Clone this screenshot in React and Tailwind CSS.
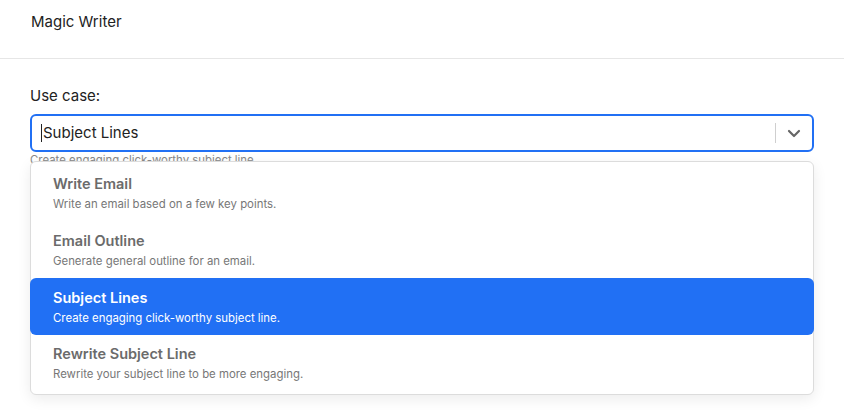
import React from "react";

const items = [
  { title: "Write Email", desc: "Write an email based on a few key points." },
  { title: "Email Outline", desc: "Generate general outline for an email." },
  { title: "Subject Lines", desc: "Create engaging click-worthy subject line.", active: true },
  { title: "Rewrite Subject Line", desc: "Rewrite your subject line to be more engaging." },
];

export default function App() {
  return (
    <div
      className="relative w-[844px] h-[419px] bg-white overflow-hidden text-[#222]"
      style={{ fontFamily: "Inter, 'Noto Sans', sans-serif" }}
    >
      <div className="h-[59px] border-b border-[#e6e6e6] px-[31px] pt-[12px]">
        <div className="text-[15px] leading-[20px]">Magic Writer</div>
      </div>
      <div className="px-[30px] pt-[27px]">
        <div className="text-[15px] leading-[20px] text-[#222]">Use case:</div>
        <div className="mt-[8px] h-[38px] rounded-[6px] border-2 border-[#2170f4] flex items-center">
          <div className="flex-1 pl-[9px] flex items-center">
            <span className="w-[1px] h-[18px] bg-[#222] mr-[1px]" />
            <span className="text-[15px] text-[#222]">Subject Lines</span>
          </div>
          <div className="w-[1px] h-[20px] bg-[#cfcfcf]" />
          <div className="w-[36px] flex items-center justify-center">
            <svg width="14" height="9" viewBox="0 0 14 9" fill="none">
              <path d="M2 2l5 5 5-5" stroke="#666" strokeWidth="2.2" strokeLinecap="round" strokeLinejoin="round" />
            </svg>
          </div>
        </div>
        <div className="mt-[1px] text-[11.4px] leading-[14px] text-[#888]">Create engaging click-worthy subject line.</div>
      </div>
      <div className="absolute left-[30px] top-[161px] w-[784px] h-[234px] rounded-[6px] border border-[#dcdcdc] bg-white shadow-[0_4px_14px_rgba(0,0,0,0.08)] py-[3px]">
        {items.map((it) => (
          <div
            key={it.title}
            className={
              "h-[56.7px] pl-[23px] flex flex-col justify-center rounded-[6px] -mx-[1px] " +
              (it.active ? "bg-[#2170f4] text-white" : "")
            }
          >
            <div className={"text-[14.5px] leading-[18px] font-semibold " + (it.active ? "text-white" : "text-[#6b6b6b]")}>
              {it.title}
            </div>
            <div className={"mt-[4px] text-[11.4px] leading-[14px] " + (it.active ? "text-white" : "text-[#777]")}>
              {it.desc}
            </div>
          </div>
        ))}
      </div>
    </div>
  );
}
